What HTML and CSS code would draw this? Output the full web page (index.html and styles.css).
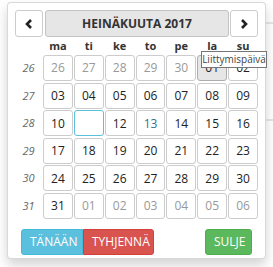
FILE: index.html
```html
<!DOCTYPE html>
<html lang="fi">
<head>
    <meta charset="UTF-8">
    <title>Datepicker</title>
    <link rel="stylesheet" href="styles.css">
</head>
<body>
    <div class="page">
        <div class="page-line line-top"></div>
        <div class="page-line line-mid"></div>

        <div class="datepicker">
            <div class="dp-head">
                <button class="btn nav-btn">
                    <svg width="8" height="10" viewBox="0 0 8 10"><polyline points="6,1 2,5 6,9" fill="none" stroke="#222" stroke-width="2.6"/></svg>
                </button>
                <button class="btn title-btn">HEINÄKUUTA 2017</button>
                <button class="btn nav-btn">
                    <svg width="8" height="10" viewBox="0 0 8 10"><polyline points="2,1 6,5 2,9" fill="none" stroke="#222" stroke-width="2.6"/></svg>
                </button>
            </div>

            <div class="dp-grid">
                <div class="dow"></div>
                <div class="dow">ma</div>
                <div class="dow">ti</div>
                <div class="dow">ke</div>
                <div class="dow">to</div>
                <div class="dow">pe</div>
                <div class="dow">la</div>
                <div class="dow">su</div>

                <div class="week">26</div>
                <button class="day muted">26</button>
                <button class="day muted">27</button>
                <button class="day muted">28</button>
                <button class="day muted">29</button>
                <button class="day muted">30</button>
                <button class="day hover">01</button>
                <button class="day">02</button>

                <div class="week">27</div>
                <button class="day">03</button>
                <button class="day">04</button>
                <button class="day">05</button>
                <button class="day">06</button>
                <button class="day">07</button>
                <button class="day">08</button>
                <button class="day">09</button>

                <div class="week">28</div>
                <button class="day">10</button>
                <button class="day focused"></button>
                <button class="day">12</button>
                <button class="day today">13</button>
                <button class="day">14</button>
                <button class="day">15</button>
                <button class="day">16</button>

                <div class="week">29</div>
                <button class="day">17</button>
                <button class="day">18</button>
                <button class="day">19</button>
                <button class="day">20</button>
                <button class="day">21</button>
                <button class="day">22</button>
                <button class="day">23</button>

                <div class="week">30</div>
                <button class="day">24</button>
                <button class="day">25</button>
                <button class="day">26</button>
                <button class="day">27</button>
                <button class="day">28</button>
                <button class="day">29</button>
                <button class="day">30</button>

                <div class="week">31</div>
                <button class="day">31</button>
                <button class="day muted">01</button>
                <button class="day muted">02</button>
                <button class="day muted">03</button>
                <button class="day muted">04</button>
                <button class="day muted">05</button>
                <button class="day muted">06</button>
            </div>

            <div class="dp-bar">
                <div class="btn-group">
                    <button class="btn bar-btn btn-info">Tänään</button>
                    <button class="btn bar-btn btn-danger">Tyhjennä</button>
                </div>
                <button class="btn bar-btn btn-success">Sulje</button>
            </div>
        </div>

        <div class="tooltip">Liittymispäivä</div>
    </div>
</body>
</html>
```

FILE: styles.css
```css
body {
    margin: 0;
    background-color: #fff;
    font-family: 'Open Sans', sans-serif;
    color: #333;
}

.page {
    position: relative;
    height: 267px;
    overflow: hidden;
}

.page-line {
    height: 2px;
    margin-left: 250px;
    background-color: #e6e6e6;
}

.line-top {
    margin-top: 22px;
}

.line-mid {
    margin-top: 95px;
}

.datepicker {
    position: absolute;
    left: 7px;
    top: 2px;
    width: 243px;
    height: 243px;
    padding: 7px 7px 5px 7px;
    background-color: #fff;
    border: 1px solid rgba(0, 0, 0, 0.15);
    border-radius: 4px;
    box-shadow: 0 6px 12px rgba(0, 0, 0, 0.175);
}

.btn {
    font-family: 'Open Sans', sans-serif;
    background-color: #fff;
    border: 1px solid #ccc;
    border-radius: 3px;
    padding: 0;
    margin: 0;
    color: #333;
    cursor: pointer;
}

.dp-head {
    display: flex;
    gap: 1px;
    height: 27px;
}

.nav-btn {
    width: 28px;
    height: 27px;
    display: flex;
    align-items: center;
    justify-content: center;
}

.title-btn {
    flex: 1;
    height: 27px;
    margin-left: 1px;
    background-color: #e6e6e6;
    border-color: #c4c4c4;
    font-size: 12px;
    font-weight: bold;
}

.dp-grid {
    display: grid;
    grid-template-columns: 27px repeat(7, 1fr);
    grid-template-rows: 16.4px;
    grid-auto-rows: 26px;
    column-gap: 1px;
    row-gap: 1.6px;
}

.dow {
    font-size: 11px;
    font-weight: bold;
    text-align: center;
    line-height: 18px;
}

.week {
    font-size: 11px;
    font-style: italic;
    color: #666;
    text-align: center;
    line-height: 26px;
}

.day {
    font-family: 'Open Sans', sans-serif;
    font-size: 12px;
    color: #222;
    background-color: #fff;
    border: 1px solid #ccc;
    border-radius: 3px;
    padding: 0;
    margin: 0;
    height: 26px;
}

.day.muted {
    color: #999;
}

.day.hover {
    background-color: #e6e6e6;
    border-color: #adadad;
}

.day.today {
    color: #31708f;
}

.day.focused {
    border-color: #5bc0de;
}

.dp-bar {
    display: flex;
    justify-content: space-between;
    padding: 10px 6px 0 6px;
}

.btn-group {
    display: flex;
}

.bar-btn {
    height: 26px;
    font-size: 12px;
    text-transform: uppercase;
    color: #fff;
    padding: 0 8px;
}

.btn-info {
    width: 62px;
    background-color: #5bc0de;
    border-color: #46b8da;
    border-radius: 3px 0 0 3px;
}

.btn-danger {
    width: 71px;
    background-color: #d9534f;
    border-color: #d43f3a;
    border-radius: 0 3px 3px 0;
}

.btn-success {
    width: 47px;
    background-color: #5cb85c;
    border-color: #4cae4c;
}

.tooltip {
    position: absolute;
    left: 201px;
    top: 51px;
    width: 64px;
    height: 15px;
    border: 1px solid #767676;
    background-color: #fff;
    font-size: 10px;
    line-height: 15px;
    color: #444;
    text-align: center;
    white-space: nowrap;
}
```
